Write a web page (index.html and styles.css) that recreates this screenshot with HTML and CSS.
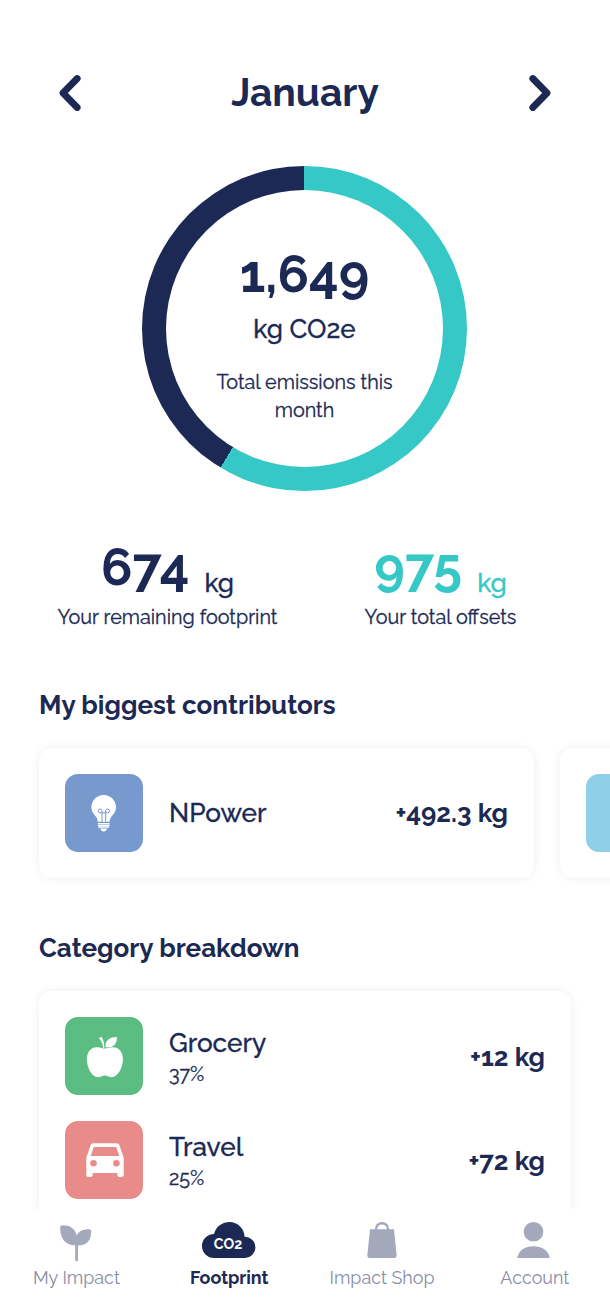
FILE: index.html
```
<!DOCTYPE html>
<html lang="en">
<head>
    <meta charset="UTF-8">
    <meta name="viewport" content="width=device-width, initial-scale=1.0">
    <title>Footprint</title>
    <link rel="stylesheet" href="styles.css">
</head>
<body>
    <main class="content">
        <header class="month">
            <svg class="arrow" viewBox="0 0 22 38"><path d="M18.2 4.5 L4 19 L18.2 33.5"/></svg>
            <h1>January</h1>
            <svg class="arrow" viewBox="0 0 22 38"><path d="M3.8 4.5 L18 19 L3.8 33.5"/></svg>
        </header>

        <section class="donut">
            <div class="donut-text">
                <div class="total">1,649</div>
                <div class="unit">kg CO2e</div>
                <div class="note">Total emissions this month</div>
            </div>
        </section>

        <section class="stats">
            <div class="stat">
                <div class="stat-value"><strong>674</strong><span>kg</span></div>
                <div class="stat-label">Your remaining footprint</div>
            </div>
            <div class="stat">
                <div class="stat-value teal"><strong>975</strong><span>kg</span></div>
                <div class="stat-label">Your total offsets</div>
            </div>
        </section>

        <h2>My biggest contributors</h2>
        <div class="slider">
            <div class="card slide">
                <div class="row">
                    <svg class="icon blue" viewBox="0 0 78 78">
                        <path fill="#fff" d="M32.8 47.8 C32.8 41.5 26.4 40.5 26.4 33.2 A12.3 12.3 0 0 1 51 33.2 C51 40.5 44.6 41.5 44.6 47.8 Z"/>
                        <path fill="none" stroke="#7799cd" stroke-width="1" d="M37 47.8 V38.6 M40.7 47.8 V38.6 M37 38.8 H35 A1.9 1.9 0 1 1 37 36.9 V38.8 H40.7 V36.9 A1.9 1.9 0 1 1 42.6 38.8 H40.7"/>
                        <path stroke="#fff" stroke-width="1.3" d="M32.8 49.6 H44.6 M32.8 51.3 H44.6 M33.2 53 H44.2"/>
                        <path fill="#fff" d="M35.2 54.6 H42.2 C41.8 56.6 40.3 57.6 38.7 57.6 C37.1 57.6 35.6 56.6 35.2 54.6 Z"/>
                    </svg>
                    <div class="name">NPower</div>
                    <div class="amount">+492.3 kg</div>
                </div>
            </div>
            <div class="card slide">
                <div class="row">
                    <div class="icon sky"></div>
                </div>
            </div>
        </div>

        <h2>Category breakdown</h2>
        <div class="card categories">
            <div class="row">
                <svg class="icon green" viewBox="0 0 78 78" fill="#fff">
                    <path d="M39.5 31.6 C43 31.2 44 30.2 48 30.2 C54 30.2 57.9 35 57.9 42 C57.9 51 52.5 60.2 47 60.2 C44 60.2 42.5 58.4 39.8 58.4 C37 58.4 35.8 60.2 32.8 60.2 C27 60.2 21.9 51 21.9 42 C21.9 35 26 30.2 31.5 30.2 C35.5 30.2 36.5 31.2 39.5 31.6 Z"/>
                    <path d="M34 21 L36.6 19.8 C38.5 22.8 39.3 26.5 39.3 31 L38.2 31 C37.7 27 36.6 23.7 34 21 Z"/>
                    <path d="M40.6 30.2 C39.8 23.5 44.5 19.8 51.9 19.9 C52.3 27 48 31.3 40.6 30.2 Z"/>
                </svg>
                <div class="name">Grocery<small>37%</small></div>
                <div class="amount">+12 kg</div>
            </div>
            <div class="row">
                <svg class="icon pink" viewBox="0 0 78 78">
                    <path fill="#fff" d="M28.6 22.2 H51.4 C53 22.2 54 23 54.5 24.4 L58.7 36.5 V54 A2 2 0 0 1 56.7 56 H54.4 A2 2 0 0 1 52.4 54 V52 H27.6 V54 A2 2 0 0 1 25.6 56 H23.3 A2 2 0 0 1 21.3 54 V36.5 L25.5 24.4 C26 23 27 22.2 28.6 22.2 Z"/>
                    <path fill="#e98b89" d="M28.8 25.9 H51.2 L54.3 35.1 H25.7 Z"/>
                    <circle fill="#e98b89" cx="28.5" cy="42.3" r="3.3"/>
                    <circle fill="#e98b89" cx="51.4" cy="42.3" r="3.3"/>
                </svg>
                <div class="name">Travel<small>25%</small></div>
                <div class="amount">+72 kg</div>
            </div>
        </div>
    </main>

    <nav class="tabs">
        <a class="tab">
            <svg viewBox="4 0 54 40"><path d="M15.2 5.5 C15.2 4 16 3.2 17.6 3.2 C25 3.2 30 6.3 31.8 13.5 C33.6 9.3 37.5 7.3 44 7.3 C45.5 7.3 46.2 8 46.2 9.5 C46.2 18 42 23.6 33 23.6 V39 H30.2 V23.3 C20 23.3 15.2 16.5 15.2 5.5 Z"/></svg>
            My Impact
        </a>
        <a class="tab active">
            <svg viewBox="0 0 54 40">
                <path d="M12 36 A12 12 0 0 1 12 12 A15.5 15.5 0 0 1 42.6 14.8 A10.6 10.6 0 0 1 43 36 Z"/>
                <text x="26" y="26.8">CO2</text>
            </svg>
            Footprint
        </a>
        <a class="tab">
            <svg viewBox="-0.4 0 54 40">
                <path d="M14.6 7.2 H38.6 L41.2 33 C41.4 35 40.4 36 38.6 36 H14.6 C12.8 36 11.8 35 12 33 Z"/>
                <path class="handle" d="M20.6 9 V7.2 A6 6 0 0 1 32.6 7.2 V9"/>
            </svg>
            Impact Shop
        </a>
        <a class="tab">
            <svg viewBox="1.2 0 54 40">
                <circle cx="26.7" cy="9.8" r="9.8"/>
                <path d="M10.4 36 C11.8 28.5 18 24.2 26.7 24.2 C35.4 24.2 41.6 28.5 43 36 Z"/>
            </svg>
            Account
        </a>
    </nav>
</body>
</html>
```
FILE: styles.css
```
* { box-sizing: border-box; }
body { margin: 0; height: 1300px; overflow: hidden; display: flex; flex-direction: column; background: #fff; color: #1b2954; font-family: Raleway, "Open Sans", sans-serif; font-size: 19.8px; line-height: 28px; font-weight: 400; font-variant-numeric: oldstyle-nums; }

.content { height: 1209px; padding: 62px 39px 0; overflow: hidden; }

.month { height: 61px; display: flex; align-items: center; justify-content: space-between; padding: 0 20px; }
.month h1 { margin: 0; font-size: 39px; line-height: 59px; font-weight: 700; }
.arrow { width: 22px; height: 38px; fill: none; stroke: #1b2954; stroke-width: 6.8; stroke-linecap: round; stroke-linejoin: round; }

.donut { width: 325px; height: 325px; margin: 43px 0 0 103px; border-radius: 50%; background: conic-gradient(#36c8c6 58.64%, #1b2954 0); padding: 24px; }
.donut-text { height: 277px; border-radius: 50%; background: #fff; text-align: center; padding: 54px 40px 0; }
.total { font-size: 52px; line-height: 60px; font-weight: 700; }
.unit { font-size: 26px; line-height: 36px; font-weight: 500; margin-top: 7px; }
.note { margin-top: 21px; }
.note, .unit, .stat-label, .stat-value span, .name { -webkit-text-stroke: 0.3px; }

.stats { display: grid; grid-template-columns: 273px 273px; margin: 46px -8px 0; }
.stat { text-align: center; }
.stat-value { display: flex; justify-content: center; align-items: flex-end; gap: 15px; height: 60px; }
.stat-value strong { font-size: 52px; line-height: 60px; font-weight: 700; }
.stat-value span { font-size: 26px; line-height: 28px; font-weight: 500; }
.stat-label { margin-top: 6px; }
.teal { color: #36c8c6; }

h2 { margin: 56px 0 25px; font-size: 26px; line-height: 36px; font-weight: 700; }

.card { background: #fff; border-radius: 13px; padding: 26px; box-shadow: 0 0 10px rgba(0, 0, 0, 0.07); display: flex; flex-direction: column; gap: 26px; }
.slider { display: flex; gap: 26px; }
.slider + h2 { margin-top: 52px; }
.slide { width: 495px; flex-shrink: 0; }
.row { display: flex; align-items: center; }
.icon { width: 78px; height: 78px; border-radius: 13px; margin-right: 26px; }
.blue { background: #7799cd; }
.sky { background: #8fd0e8; }
.green { background: #5bbd82; }
.pink { background: #e98b89; }
.name { flex: 1; font-size: 26.2px; line-height: 36px; font-weight: 500; }
.name small { display: block; font-size: 19.8px; line-height: 27px; font-weight: 400; }
.amount { font-size: 26px; line-height: 36px; font-weight: 700; }
.categories .name { padding-top: 1px; }
.categories .amount { padding-top: 2px; }

.tabs { height: 91px; display: grid; grid-template-columns: repeat(4, 152.8px); padding-top: 13px; background: #fff; }
.tab { display: flex; flex-direction: column; align-items: center; gap: 2px; font-size: 17.9px; font-weight: 400; color: #868ca6; white-space: nowrap; }
.tab svg { width: 54px; height: 40px; fill: #a3a8bb; overflow: visible; }
.tab .handle { fill: none; stroke: #a3a8bb; stroke-width: 2.4; }
.tab text { fill: #fff; font-size: 14.2px; font-weight: 700; text-anchor: middle; }
.tab.active { color: #1b2954; font-weight: 700; }
.tab.active svg { fill: #1b2954; }
```
